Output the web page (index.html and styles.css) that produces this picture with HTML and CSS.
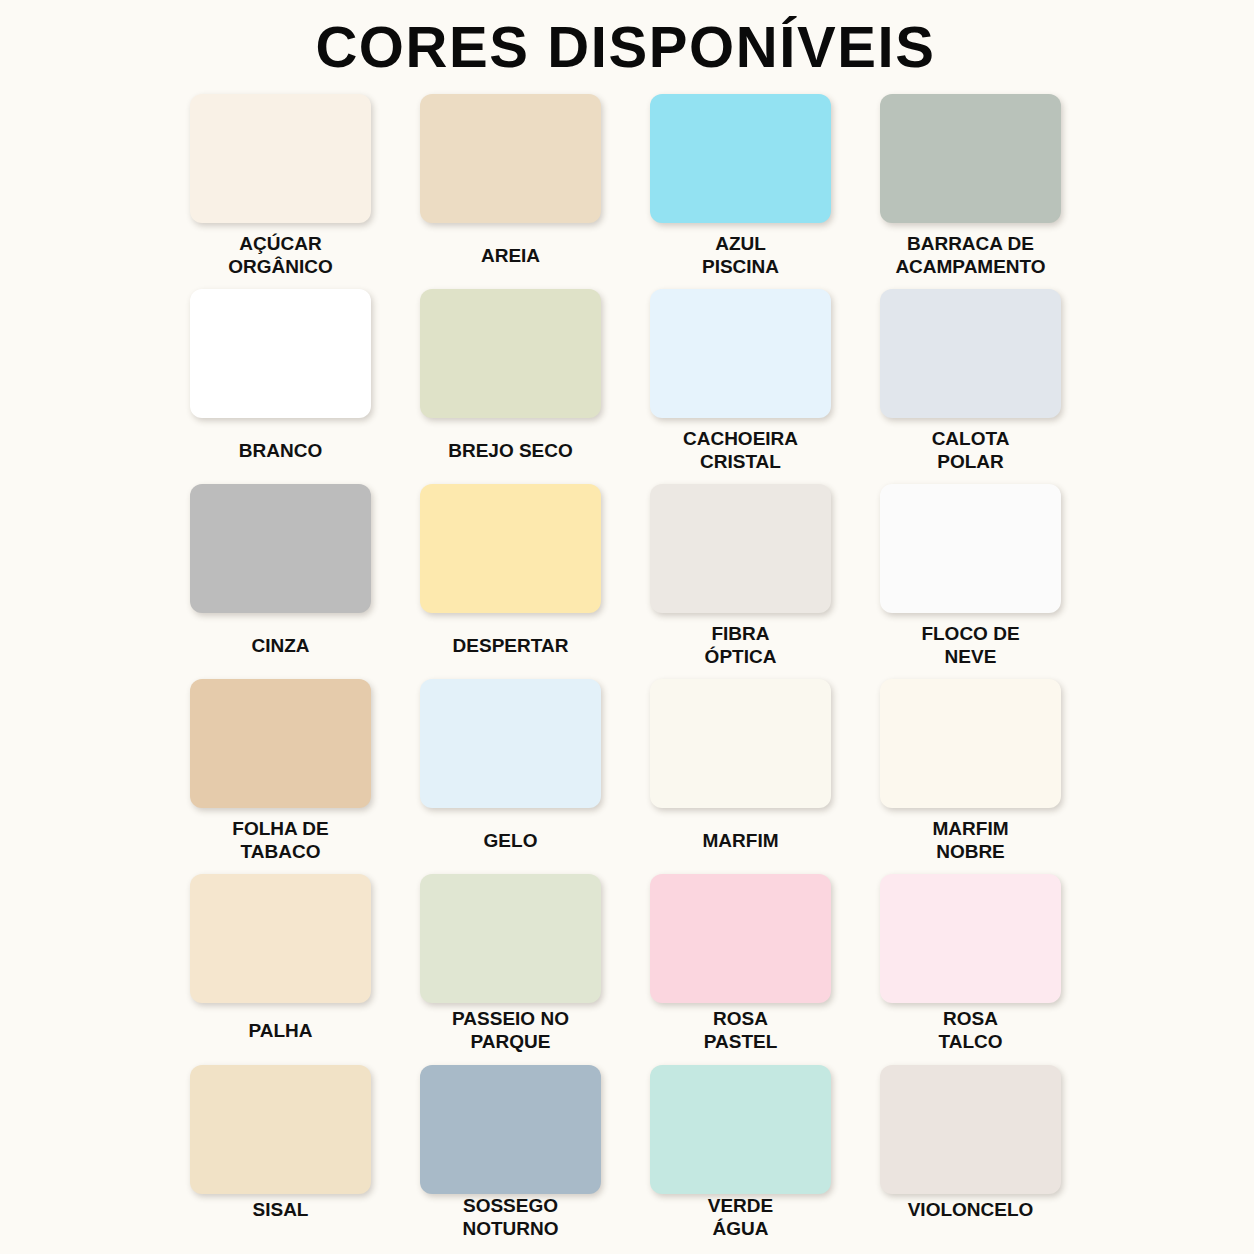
FILE: index.html
```html
<!DOCTYPE html>
<html lang="pt-BR">
<head>
<meta charset="utf-8">
<title>Cores disponíveis</title>
<link rel="stylesheet" href="styles.css">
</head>
<body>
<main class="page">
  <h1 class="title">CORES DISPONÍVEIS</h1>
  <div class="grid">
    <div class="item"><div class="swatch c-acucar"></div><div class="label">AÇÚCAR<br>ORGÂNICO</div></div>
    <div class="item"><div class="swatch c-areia"></div><div class="label">AREIA</div></div>
    <div class="item"><div class="swatch c-azul"></div><div class="label">AZUL<br>PISCINA</div></div>
    <div class="item"><div class="swatch c-barraca"></div><div class="label">BARRACA DE<br>ACAMPAMENTO</div></div>

    <div class="item"><div class="swatch c-branco"></div><div class="label">BRANCO</div></div>
    <div class="item"><div class="swatch c-brejo"></div><div class="label">BREJO SECO</div></div>
    <div class="item"><div class="swatch c-cachoeira"></div><div class="label">CACHOEIRA<br>CRISTAL</div></div>
    <div class="item"><div class="swatch c-calota"></div><div class="label">CALOTA<br>POLAR</div></div>

    <div class="item"><div class="swatch c-cinza"></div><div class="label">CINZA</div></div>
    <div class="item"><div class="swatch c-despertar"></div><div class="label">DESPERTAR</div></div>
    <div class="item"><div class="swatch c-fibra"></div><div class="label">FIBRA<br>ÓPTICA</div></div>
    <div class="item"><div class="swatch c-floco"></div><div class="label">FLOCO DE<br>NEVE</div></div>

    <div class="item"><div class="swatch c-tabaco"></div><div class="label">FOLHA DE<br>TABACO</div></div>
    <div class="item"><div class="swatch c-gelo"></div><div class="label">GELO</div></div>
    <div class="item"><div class="swatch c-marfim"></div><div class="label">MARFIM</div></div>
    <div class="item"><div class="swatch c-marfim-nobre"></div><div class="label">MARFIM<br>NOBRE</div></div>

    <div class="item short"><div class="swatch c-palha"></div><div class="label">PALHA</div></div>
    <div class="item short"><div class="swatch c-passeio"></div><div class="label">PASSEIO NO<br>PARQUE</div></div>
    <div class="item short"><div class="swatch c-rosa-pastel"></div><div class="label">ROSA<br>PASTEL</div></div>
    <div class="item short"><div class="swatch c-rosa-talco"></div><div class="label">ROSA<br>TALCO</div></div>

    <div class="item last"><div class="swatch c-sisal"></div><div class="label">SISAL</div></div>
    <div class="item last"><div class="swatch c-sossego"></div><div class="label">SOSSEGO<br>NOTURNO</div></div>
    <div class="item last"><div class="swatch c-verde"></div><div class="label">VERDE<br>ÁGUA</div></div>
    <div class="item last"><div class="swatch c-violoncelo"></div><div class="label">VIOLONCELO</div></div>
  </div>
</main>
</body>
</html>
```

FILE: styles.css
```css
html, body {
  margin: 0;
  padding: 0;
  background: #fcfaf5;
}

.page {
  width: 1254px;
  height: 1254px;
  font-family: "Liberation Sans", Arial, sans-serif;
  color: #111;
  display: flex;
  flex-direction: column;
  align-items: center;
}

.title {
  margin: 0 3px 0 0;
  padding-top: 15px;
  height: 94px;
  box-sizing: border-box;
  font-size: 58px;
  line-height: 64px;
  font-weight: 700;
  letter-spacing: 1.6px;
  color: #0a0a0a;
}

.grid {
  display: grid;
  grid-template-columns: repeat(4, 181px);
  column-gap: 49px;
  margin-right: 3px;
}

.item {
  display: flex;
  flex-direction: column;
  height: 195px;
}

.item.short {
  height: 191px;
}

.item.last {
  height: 160px;
}

.swatch {
  width: 181px;
  height: 129px;
  border-radius: 12px;
  box-shadow: 2px 3px 6px rgba(60, 45, 30, 0.22);
  flex: none;
}

.label {
  height: 64px;
  display: flex;
  align-items: center;
  justify-content: center;
  text-align: center;
  font-size: 19px;
  line-height: 23px;
  font-weight: 700;
  color: #111;
}

.item.short .label {
  height: 54px;
}

.item.last .label {
  height: 50px;
}

.c-acucar { background: #f9f1e6; }
.c-areia { background: #ecdcc3; }
.c-azul { background: #93e2f2; }
.c-barraca { background: #b9c2ba; }
.c-branco { background: #ffffff; }
.c-brejo { background: #dfe2c8; }
.c-cachoeira { background: #e6f3fc; }
.c-calota { background: #e1e6ec; }
.c-cinza { background: #bcbcbc; }
.c-despertar { background: #fde9ae; }
.c-fibra { background: #ece8e3; }
.c-floco { background: #fbfbfb; }
.c-tabaco { background: #e5cbab; }
.c-gelo { background: #e3f1f9; }
.c-marfim { background: #faf8ef; }
.c-marfim-nobre { background: #fcf8ee; }
.c-palha { background: #f5e6ce; }
.c-passeio { background: #e0e6d2; }
.c-rosa-pastel { background: #fbd6df; }
.c-rosa-talco { background: #fde9ef; }
.c-sisal { background: #f1e2c6; }
.c-sossego { background: #a8bac8; }
.c-verde { background: #c4e8e1; }
.c-violoncelo { background: #ebe4df; }
```
